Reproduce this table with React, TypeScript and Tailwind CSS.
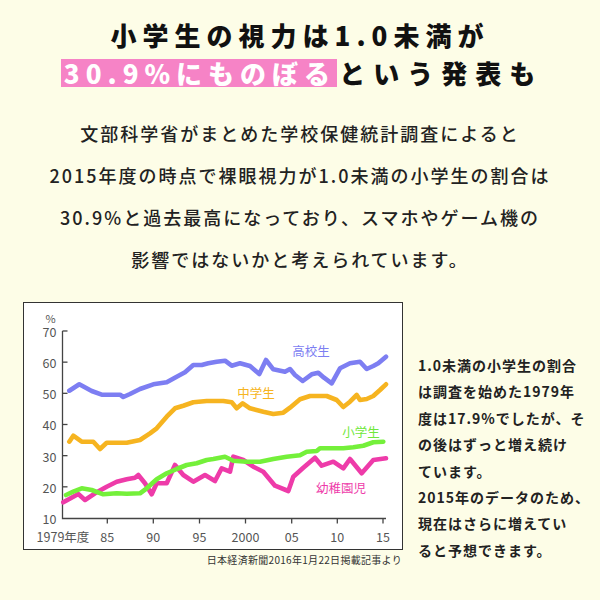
import * as React from "react";

type Pt = [number, number];

// points traced in a 3x crop of the chart; toPage maps them back to page pixels
const toPage = (pts: Pt[]) =>
  pts.map(([x, y]) => `${(20 + x / 3).toFixed(1)},${(295 + y / 3).toFixed(1)}`).join(" ");

const SERIES: { color: string; pts: Pt[] }[] = [
  {
    color: "#7d7ef2",
    pts: [
      [148, 287], [178, 268], [215, 288], [245, 299], [300, 299], [310, 306], [330, 297], [360, 282],
      [400, 268], [440, 262], [470, 245], [495, 232], [520, 210], [545, 210], [565, 205], [590, 200],
      [615, 197], [635, 212], [660, 205], [690, 213], [718, 237], [738, 195], [760, 223], [795, 230],
      [810, 222], [825, 240], [848, 258], [875, 238], [895, 233], [912, 248], [935, 265], [960, 220],
      [990, 205], [1020, 200], [1040, 222], [1060, 213], [1075, 205], [1098, 185],
    ],
  },
  {
    color: "#f6b420",
    pts: [
      [148, 440], [160, 422], [185, 440], [220, 440], [240, 462], [260, 443], [320, 443], [360, 435],
      [390, 415], [410, 400], [440, 365], [465, 340], [490, 332], [520, 322], [560, 318], [610, 318],
      [635, 322], [650, 340], [668, 325], [690, 340], [730, 350], [760, 357], [790, 353], [810, 338],
      [840, 313], [870, 303], [920, 303], [950, 315], [970, 336], [990, 320], [1010, 300], [1020, 315],
      [1040, 312], [1060, 303], [1080, 285], [1098, 268],
    ],
  },
  {
    color: "#ee3ba9",
    pts: [
      [130, 622], [160, 605], [175, 597], [195, 615], [225, 595], [260, 575], [290, 560], [320, 553],
      [345, 548], [355, 540], [375, 565], [395, 598], [410, 565], [440, 565], [465, 510], [490, 540],
      [520, 560], [555, 540], [585, 558], [605, 520], [630, 530], [640, 485], [670, 495], [700, 515],
      [730, 530], [765, 572], [805, 588], [820, 545], [850, 518], [885, 488], [905, 512], [940, 500],
      [970, 520], [990, 492], [1025, 535], [1060, 495], [1098, 490],
    ],
  },
  {
    color: "#74f03a",
    pts: [
      [138, 600], [160, 590], [185, 580], [215, 585], [250, 598], [290, 595], [320, 596], [360, 595],
      [380, 580], [410, 553], [440, 535], [470, 522], [500, 510], [530, 505], [560, 495], [580, 492],
      [615, 485], [640, 497], [680, 500], [720, 500], [760, 492], [800, 485], [840, 481], [860, 470],
      [890, 468], [900, 460], [940, 460], [970, 460], [1000, 457], [1030, 452], [1060, 442], [1090, 440],
    ],
  },
];

const Y_TICKS = [70, 60, 50, 40, 30, 20, 10];
const yOf = (v: number) => 518 - (v - 10) * 3.117;
const X_TICKS: [string, number][] = [
  ["85", 107.3],
  ["90", 153.3],
  ["95", 199.5],
  ["2000", 245.5],
  ["05", 291.7],
  ["10", 337.3],
  ["15", 383],
];

const LABELS = [
  { text: "高校生", x: 311, y: 350, color: "#7d7ef2" },
  { text: "中学生", x: 256, y: 392, color: "#f6b420" },
  { text: "小学生", x: 361, y: 431, color: "#6fe83a" },
  { text: "幼稚園児", x: 341, y: 487, color: "#ee3ba9" },
];

function VisionChart() {
  return (
    <svg width={378} height={246} viewBox="24 303 378 246" className="block">
      <g fill="#555" fontSize={12.5} fontFamily="'Noto Sans CJK JP', sans-serif">
        <text x={50.5} y={317.5} textAnchor="middle" dominantBaseline="central" fontSize={11}>
          %
        </text>
        {Y_TICKS.map((v) => (
          <text key={v} x={56.5} y={yOf(v) + 0.5} textAnchor="end" dominantBaseline="central">
            {v}
          </text>
        ))}
        <text x={63} y={536} textAnchor="middle" dominantBaseline="central">
          1979年度
        </text>
        {X_TICKS.map(([t, x]) => (
          <text key={t} x={x} y={536} textAnchor="middle" dominantBaseline="central">
            {t}
          </text>
        ))}
      </g>
      <g stroke="#444" strokeWidth={1.3} fill="none">
        <polyline points="62.5,331 62.5,518.5 386,518.5" />
        {Y_TICKS.slice(0, 6).map((v) => (
          <line key={v} x1={62.5} y1={yOf(v)} x2={67.5} y2={yOf(v)} />
        ))}
        {X_TICKS.map(([t, x]) => (
          <line key={t} x1={x} y1={518.5} x2={x} y2={523.5} />
        ))}
      </g>
      {SERIES.map((s) => (
        <polyline
          key={s.color}
          points={toPage(s.pts)}
          fill="none"
          stroke={s.color}
          strokeWidth={4.6}
          strokeLinejoin="round"
          strokeLinecap="round"
        />
      ))}
      <g fontSize={12.5} fontFamily="'Noto Sans CJK JP', sans-serif">
        {LABELS.map((l) => (
          <text key={l.text} x={l.x} y={l.y} fill={l.color} textAnchor="middle" dominantBaseline="central">
            {l.text}
          </text>
        ))}
      </g>
    </svg>
  );
}

const BODY = [
  "文部科学省がまとめた学校保健統計調査によると",
  "2015年度の時点で裸眼視力が1.0未満の小学生の割合は",
  "30.9%と過去最高になっており、スマホやゲーム機の",
  "影響ではないかと考えられています。",
];

const SIDE = [
  "1.0未満の小学生の割合",
  "は調査を始めた1979年",
  "度は17.9%でしたが、そ",
  "の後はずっと増え続け",
  "ています。",
  "2015年のデータのため、",
  "現在はさらに増えてい",
  "ると予想できます。",
];

export default function App() {
  return (
    <div className="w-[600px] h-[600px] overflow-hidden bg-[#fdfde7] text-[#1a1a1a] font-['Noto_Sans_CJK_JP',sans-serif]">
      <div className="pt-[16px] text-[26px] font-black tracking-[6px] leading-[38px] text-[#111]">
        <div className="text-center">小学生の視力は1.0未満が</div>
        <div className="flex justify-center items-center pl-[4px]">
          <span className="inline-block h-[28px] leading-[28px] bg-[#f683c6] text-white pl-[3px] pr-[1px]">
            30.9%にものぼる
          </span>
          <span className="ml-[2px] tracking-[8px]">という発表も</span>
        </div>
      </div>

      <div className="mt-[20px] text-[18px] font-medium tracking-[2px] leading-[42px] text-center text-[#222]">
        {BODY.map((line) => (
          <div key={line}>{line}</div>
        ))}
      </div>

      <div className="mt-[22px] flex items-start">
        <div className="ml-[23px] w-[380px]">
          <div className="w-[380px] h-[248px] border border-[#333] bg-white">
            <VisionChart />
          </div>
          <div className="mt-[3px] pr-[1px] text-right text-[10px] leading-[14px] tracking-[0.3px] text-[#333]">
            日本経済新聞2016年1月22日掲載記事より
          </div>
        </div>
        <div className="ml-[15px] mt-[50px] text-[14px] font-bold tracking-[1px] leading-[26.4px] text-[#222] whitespace-nowrap">
          {SIDE.map((line) => (
            <div key={line}>{line}</div>
          ))}
        </div>
      </div>
    </div>
  );
}
